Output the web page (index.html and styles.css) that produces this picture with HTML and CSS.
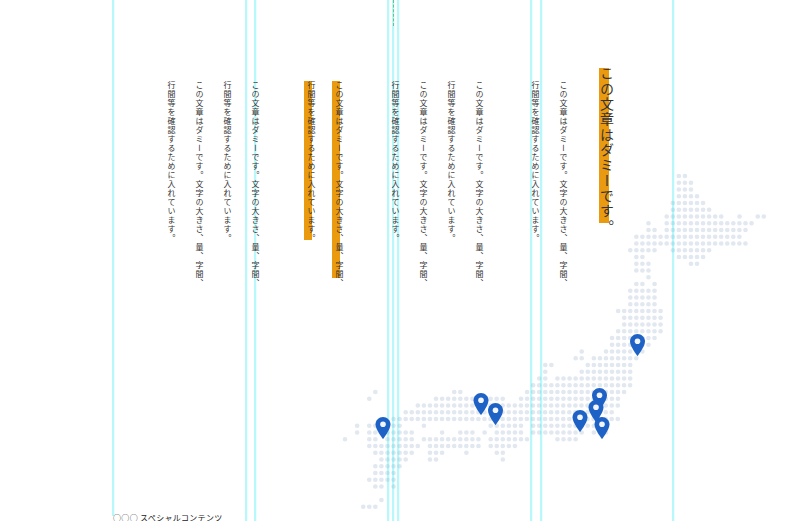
FILE: index.html
```html
<!DOCTYPE html>
<html lang="ja">
<head>
<meta charset="utf-8">
<title>スペシャルコンテンツ</title>
<link rel="stylesheet" href="styles.css">
</head>
<body>
<svg class="map" viewBox="0 0 70 50" preserveAspectRatio="none" aria-hidden="true">
<path class="dots" d="M55 0H56M55 1H57M55 2H57M55 3H58M54 4H59M54 5H60M53 6H62M65 6h.01M68 6H69M50 7h.01M53 7H67M50 8H51M53 8H66M48 9H65M48 10H66M47 11H51M54 11H60M48 12H49M55 12H59M48 13H50M57 13H58M48 14H50M50 15h.01M48 16H49M51 16h.01M47 17H51M47 18H51M47 19H51M45 20H52M46 21H52M46 22H52M45 23H52M44 24H51M44 25H50M39 26h.01M43 26H49M38 27H39M41 27H48M33 28H34M40 28H47M33 29h.01M39 29H47M32 30H33M35 30H47M31 31H47M5 32h.01M18 32H19M30 32H46M4 33h.01M15 33H26M29 33H45M12 34H45M10 35H44M8 36H45M2 37h.01M4 37H5M8 37H9M13 37h.01M24 37H29M31 37H43M2 38h.01M4 38H5M7 38H11M16 38h.01M19 38H21M23 38h.01M25 38H29M31 38H39M41 38H43M0 39h.01M4 39H5M7 39H11M13 39H22M24 39H30M35 39H38M4 40H12M14 40H22M24 40H28M5 41H11M14 41H16M20 41h.01M25 41H26M6 42H10M14 42H15M26 42h.01M5 43H9M5 44H8M4 45H8M5 46H6M8 46h.01M6 48h.01M3 49H5"/>
</svg>
<div class="guides" aria-hidden="true">
<i class="guide g1"></i><i class="guide g2"></i><i class="guide g3"></i><i class="guide g4"></i><i class="guide g5"></i><i class="guide g6"></i><i class="guide g7"></i><i class="guide g8"></i><i class="guide g9"></i>
<i class="dashed"></i>
</div>
<main class="article">
<h1 class="title"><span class="mark-lg">この文章はダミーです。</span></h1>
<p class="copy">この文章はダミーです。文字の大きさ、量、字間、<br>行間等を確認するために入れています。<br><br>この文章はダミーです。文字の大きさ、量、字間、<br>行間等を確認するために入れています。<br>この文章はダミーです。文字の大きさ、量、字間、<br>行間等を確認するために入れています。<br><br><span class="mark mark-long">この文章はダミーです。文字の大きさ、量、字間、</span><br><span class="mark mark-short">行間等を確認するために入れています。</span><br><br>この文章はダミーです。文字の大きさ、量、字間、<br>行間等を確認するために入れています。<br>この文章はダミーです。文字の大きさ、量、字間、<br>行間等を確認するために入れています。</p>
</main>
<footer class="foot">○○○ スペシャルコンテンツ</footer>
<svg class="pins" viewBox="0 0 787 521" aria-hidden="true">
<defs>
<g id="pin"><path class="pin-body" d="M7.5 0C3.4 0 0 3.3 0 7.4c0 5 7.5 14.6 7.5 14.6S15 12.4 15 7.4C15 3.3 11.6 0 7.5 0z"/><circle class="pin-hole" cx="7.5" cy="7.2" r="2.8"/></g>
</defs>
<use href="#pin" x="630" y="334"/>
<use href="#pin" x="592" y="388"/>
<use href="#pin" x="588.5" y="400"/>
<use href="#pin" x="572.5" y="410"/>
<use href="#pin" x="594.5" y="417"/>
<use href="#pin" x="473.5" y="393"/>
<use href="#pin" x="488" y="403"/>
<use href="#pin" x="375.5" y="417"/>
</svg>
</body>
</html>
```
FILE: styles.css
```css
html, body {
  margin: 0;
  padding: 0;
  height: 521px;
  overflow: hidden;
  background: #fff;
}
body {
  position: relative;
  font-family: "Noto Sans CJK JP", "Noto Sans", sans-serif;
  color: #333;
}
.map {
  position: absolute;
  left: 345.3px;
  top: 176.3px;
  width: 424.9px;
  height: 337.5px;
  overflow: visible;
}
.dots {
  fill: none;
  stroke: #e2e8f0;
  stroke-width: 4.7px;
  stroke-linecap: round;
  stroke-dasharray: 0 6.06;
  vector-effect: non-scaling-stroke;
}
.guides {
  position: absolute;
  inset: 0;
}
.guide {
  position: absolute;
  top: 0;
  bottom: 0;
  width: 2px;
  background: rgba(0, 230, 240, .28);
  box-shadow: 1px 0 0 rgba(0, 230, 240, .08);
}
.g1 { left: 112px; bottom: 5px; }
.g2 { left: 245px; }
.g3 { left: 254px; }
.g4 { left: 387px; }
.g5 { left: 392px; }
.g6 { left: 397px; }
.g7 { left: 530px; }
.g8 { left: 540px; }
.g9 { left: 672px; }
.dashed {
  position: absolute;
  left: 393px;
  top: 0;
  height: 26px;
  border-left: 1px dashed #6fbf85;
}
.article {
  position: relative;
  writing-mode: vertical-rl;
  height: 420px;
  width: 481px;
  margin: 0 0 0 156px;
  padding-top: 81px;
}
.title {
  margin: -15.3px 0 0;
  width: 60px;
  font-size: 14px;
  font-weight: 400;
  line-height: 60px;
  letter-spacing: 1.33px;
}
.mark-lg {
  background: linear-gradient(to right, transparent 1.7px, #ea9a0e 1.7px, #ea9a0e 11.7px, transparent 11.7px) 0 2.3px / 100% 155px no-repeat;
}
.copy {
  margin: 0;
  font-size: 8px;
  line-height: 28px;
  letter-spacing: 1px;
}
.mark {
  padding-left: 2px;
  background: linear-gradient(to right, #ea9a0e 8px, transparent 8px) 0 0 no-repeat;
}
.mark-long { background-size: 100% 197px; }
.mark-short { background-size: 100% 159px; }
.foot {
  position: relative;
  margin: 13px 0 0 113px;
  font-size: 8px;
  line-height: 8px;
  letter-spacing: .04em;
  color: #222;
}
.pins {
  position: absolute;
  left: 0;
  top: 0;
  width: 787px;
  height: 521px;
}
.pin-body { fill: #1f62c6; }
.pin-hole { fill: #f2f6fc; }
```
